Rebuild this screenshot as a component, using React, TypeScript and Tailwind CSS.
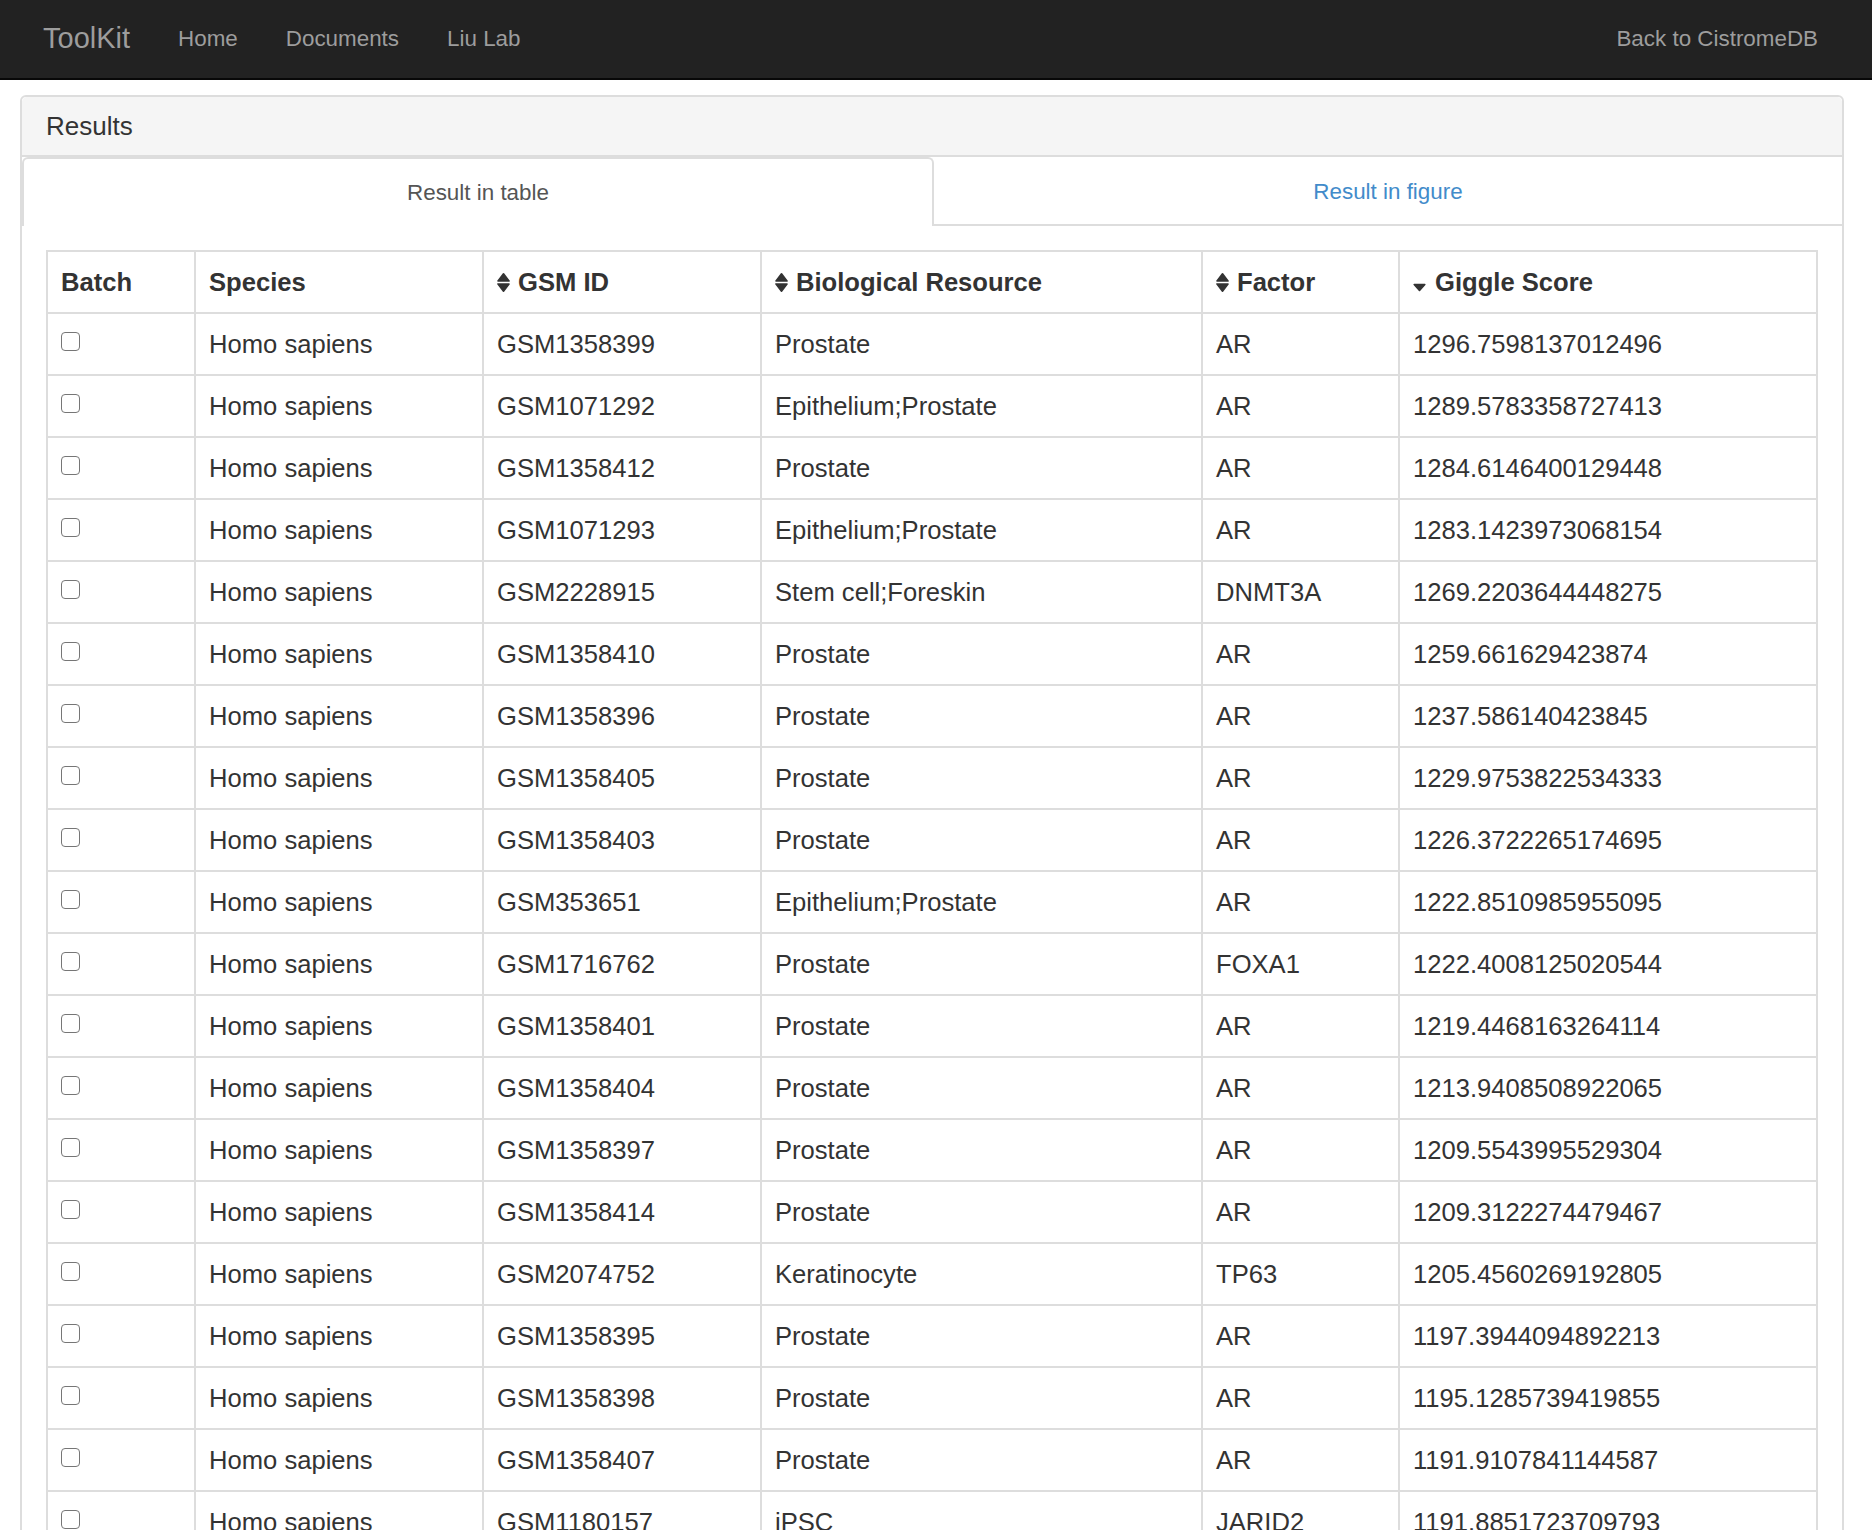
import React from 'react';

type Row = {
  gsm: string;
  resource: string;
  factor: string;
  score: string;
};

const rows: Row[] = [
  { gsm: 'GSM1358399', resource: 'Prostate', factor: 'AR', score: '1296.7598137012496' },
  { gsm: 'GSM1071292', resource: 'Epithelium;Prostate', factor: 'AR', score: '1289.5783358727413' },
  { gsm: 'GSM1358412', resource: 'Prostate', factor: 'AR', score: '1284.6146400129448' },
  { gsm: 'GSM1071293', resource: 'Epithelium;Prostate', factor: 'AR', score: '1283.1423973068154' },
  { gsm: 'GSM2228915', resource: 'Stem cell;Foreskin', factor: 'DNMT3A', score: '1269.2203644448275' },
  { gsm: 'GSM1358410', resource: 'Prostate', factor: 'AR', score: '1259.661629423874' },
  { gsm: 'GSM1358396', resource: 'Prostate', factor: 'AR', score: '1237.586140423845' },
  { gsm: 'GSM1358405', resource: 'Prostate', factor: 'AR', score: '1229.9753822534333' },
  { gsm: 'GSM1358403', resource: 'Prostate', factor: 'AR', score: '1226.3722265174695' },
  { gsm: 'GSM353651', resource: 'Epithelium;Prostate', factor: 'AR', score: '1222.8510985955095' },
  { gsm: 'GSM1716762', resource: 'Prostate', factor: 'FOXA1', score: '1222.4008125020544' },
  { gsm: 'GSM1358401', resource: 'Prostate', factor: 'AR', score: '1219.4468163264114' },
  { gsm: 'GSM1358404', resource: 'Prostate', factor: 'AR', score: '1213.9408508922065' },
  { gsm: 'GSM1358397', resource: 'Prostate', factor: 'AR', score: '1209.5543995529304' },
  { gsm: 'GSM1358414', resource: 'Prostate', factor: 'AR', score: '1209.3122274479467' },
  { gsm: 'GSM2074752', resource: 'Keratinocyte', factor: 'TP63', score: '1205.4560269192805' },
  { gsm: 'GSM1358395', resource: 'Prostate', factor: 'AR', score: '1197.3944094892213' },
  { gsm: 'GSM1358398', resource: 'Prostate', factor: 'AR', score: '1195.1285739419855' },
  { gsm: 'GSM1358407', resource: 'Prostate', factor: 'AR', score: '1191.9107841144587' },
  { gsm: 'GSM1180157', resource: 'iPSC', factor: 'JARID2', score: '1191.8851723709793' },
];

function SortIcon() {
  return (
    <svg width="13" height="21" viewBox="0 0 13 21" className="shrink-0">
      <path d="M1 9 L6.5 1.8 L12 9 Z" fill="#333" stroke="#333" strokeWidth="1.6" strokeLinejoin="round" />
      <path d="M1 12 L12 12 L6.5 19.2 Z" fill="#333" stroke="#333" strokeWidth="1.6" strokeLinejoin="round" />
    </svg>
  );
}

function SortDescIcon() {
  return (
    <svg width="13" height="21" viewBox="0 0 13 21" className="shrink-0">
      <path d="M1.2 12.5 L11.8 12.5 L6.5 18.5 Z" fill="#333" stroke="#333" strokeWidth="1.6" strokeLinejoin="round" />
    </svg>
  );
}

const th = 'border-2 border-[#ddd] px-[13px] py-[13px] text-left align-bottom font-bold leading-[34px]';
const td = 'border-2 border-[#ddd] px-[13px] py-[13px] align-top leading-[34px]';

export default function App() {
  return (
    <div className="min-h-screen bg-white font-['Liberation_Sans',Arial,sans-serif] text-[#333]">
      <nav className="flex h-[80px] items-center border-b-2 border-[#080808] bg-[#222] text-[#9d9d9d]">
        <span className="ml-[43px] text-[29px]">ToolKit</span>
        <div className="ml-[24px] flex text-[22.4px]">
          <a className="px-[24px]">Home</a>
          <a className="px-[24px]">Documents</a>
          <a className="px-[24px]">Liu Lab</a>
        </div>
        <a className="ml-auto mr-[54px] text-[22.4px]">Back to CistromeDB</a>
      </nav>

      <div className="pl-[20px] pr-[28px] pt-[15px]">
        <div className="rounded-[6px] border-2 border-[#ddd]">
          <div className="flex h-[60px] items-center rounded-t-[5px] border-b-2 border-[#ddd] bg-[#f5f5f5] px-[24px] text-[26px]">
            Results
          </div>

          <div className="flex h-[69px] text-[22.4px]">
            <div className="flex flex-1 items-center justify-center rounded-t-[6px] border-2 border-b-0 border-[#ddd] text-[#555]">
              Result in table
            </div>
            <div className="flex flex-1 items-center justify-center border-t-2 border-b-2 border-t-transparent border-b-[#ddd] text-[#428bca]">
              Result in figure
            </div>
          </div>

          <div className="p-[24px]">
            <table className="w-full table-fixed border-collapse text-[25.6px]">
              <colgroup>
                <col className="w-[148px]" />
                <col className="w-[288px]" />
                <col className="w-[278px]" />
                <col className="w-[441px]" />
                <col className="w-[197px]" />
                <col />
              </colgroup>
              <thead>
                <tr>
                  <th className={th}>Batch</th>
                  <th className={th}>Species</th>
                  <th className={th}>
                    <span className="flex items-center gap-[8px]">
                      <SortIcon />
                      GSM ID
                    </span>
                  </th>
                  <th className={th}>
                    <span className="flex items-center gap-[8px]">
                      <SortIcon />
                      Biological Resource
                    </span>
                  </th>
                  <th className={th}>
                    <span className="flex items-center gap-[8px]">
                      <SortIcon />
                      Factor
                    </span>
                  </th>
                  <th className={th}>
                    <span className="flex items-center gap-[9px]">
                      <SortDescIcon />
                      Giggle Score
                    </span>
                  </th>
                </tr>
              </thead>
              <tbody>
                {rows.map((row) => (
                  <tr key={row.gsm}>
                    <td className={td}>
                      <input
                        type="checkbox"
                        className="mt-[5px] block h-[19px] w-[19px] appearance-none rounded-[4px] border-[1.5px] border-[#767676] bg-white"
                      />
                    </td>
                    <td className={td}>Homo sapiens</td>
                    <td className={td}>{row.gsm}</td>
                    <td className={td}>{row.resource}</td>
                    <td className={td}>{row.factor}</td>
                    <td className={td}>{row.score}</td>
                  </tr>
                ))}
              </tbody>
            </table>
          </div>
        </div>
      </div>
    </div>
  );
}
